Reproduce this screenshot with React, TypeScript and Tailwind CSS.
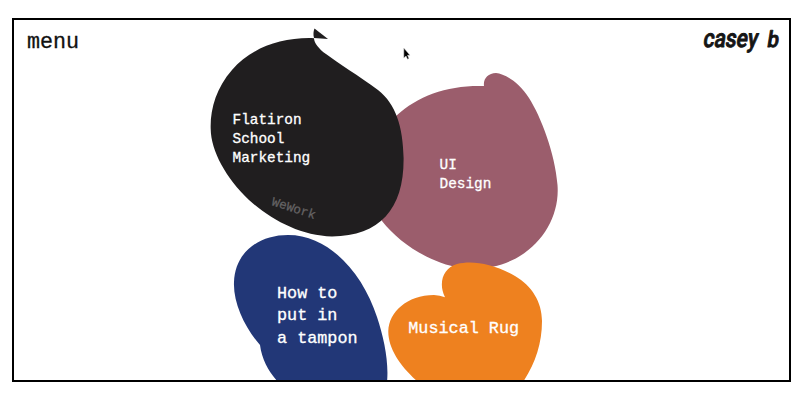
export default function App() {
  return (
    <main className="h-[400px] w-[800px] overflow-hidden bg-white pl-3 pt-[18px]">
      <div className="grid h-[364px] w-[779px] overflow-hidden border-2 border-black bg-white">
        <header className="z-10 col-start-1 row-start-1 flex h-12 items-start justify-between pl-[13px] pr-px">
          <a className="pt-[9px] font-['Liberation_Mono',monospace] text-[21.7px] leading-7 text-[#111] [-webkit-text-stroke:0.3px_#111]">menu</a>
          <svg width="88" height="40" viewBox="700 20 88 40" aria-label="casey b" strokeLinejoin="round" className="fill-[#151515] stroke-[#151515] font-['Roboto',sans-serif] font-medium">
            <g transform="translate(0 46.7) skewX(-9)" strokeWidth="0.9">
              <text x="702.5" y="0" fontSize="25.5" textLength="54.5" lengthAdjust="spacingAndGlyphs">casey</text>
              <text x="766.5" y="0" fontSize="22.5" textLength="11.5" lengthAdjust="spacingAndGlyphs">b</text>
            </g>
          </svg>
        </header>
        <svg className="col-start-1 row-start-1 font-['Liberation_Mono',monospace]" width="775" height="360" viewBox="14 20 775 360">
          <path fill="#9b5d6c" d="M484 86 C448 85 419 95 396 116 C370 139 365 190 382 221 C399 243 430 263 461 268 C521 275 561 230 557.5 185 C555 153 541 117 529 98 C519 82 505 74 496 73 C488 73 483 79 484 86Z" />
          <path fill="#201e1f" d="M314 38.2 C281 37 251 48 232 70 C216 88 210 110 210.7 129 C211 151 226 178 249 200 C271 220 301 236 332 236.5 C380 236 404 209 403.6 158 C403 127 396 104 378 90 C359 76 338 63 326 54 C319 49 314 43 314 38.2Z" />
          <path fill="#201e1f" d="M314 38 C313 34 313.5 31 314.5 28.5 L328 39Z" />
          <path fill="#223777" d="M260 345 C245 328 233 303 234 282 C235 252 259 235 288 235 C330 235 363 274 377 317 C384 338 389 362 387 382 L278 382 C269 372 262 360 260 345Z" />
          <path fill="#ee811f" d="M445 297.3 C438 283 443 268 457 264 C473 260 494 264 515 276 C532 286 542 302 542 321 C542 344 535 364 523 382 L418 382 C401 367 388 349 388.3 331 C389 312 407 295 434 295 Q440 295.3 445 297.3Z" />
          <g fill="white" stroke="white" strokeWidth="0.3">
            <g fontSize="14.4">
              <text x="232.5" y="124">Flatiron</text>
              <text x="232.5" y="143">School</text>
              <text x="232.5" y="162">Marketing</text>
              <text x="439.5" y="169">UI</text>
              <text x="439.5" y="188.3">Design</text>
            </g>
            <g fontSize="16.8">
              <text x="277" y="298.4">How to</text>
              <text x="277" y="320.4">put in</text>
              <text x="277" y="343">a tampon</text>
              <text x="408.3" y="333">Musical Rug</text>
            </g>
          </g>
          <text x="271" y="205" fontSize="12.6" fill="#656364" stroke="#656364" strokeWidth="0.25" transform="rotate(18 271 205)">WeWork</text>
          <path fill="black" stroke="#ddd" strokeWidth="0.5" d="M403.8 48 V58 L406 56 L407.5 59.2 L409 58.5 L407.5 55.2 H410Z" />
        </svg>
      </div>
    </main>
  );
}
